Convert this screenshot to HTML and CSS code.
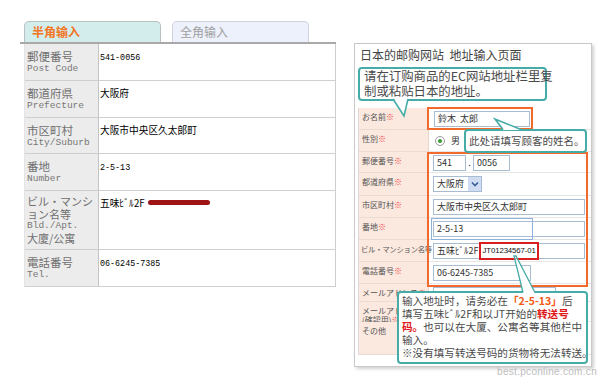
FILE: index.html
```html
<!DOCTYPE html>
<html lang="zh-CN">
<head>
<meta charset="utf-8">
<title>地址输入</title>
<link rel="stylesheet" href="styles.css">
</head>
<body>
<div class="page">
  <section class="left">
    <div class="tabs">
      <div class="tab tab-on">半角输入</div>
      <div class="tab tab-off">全角输入</div>
    </div>
    <div class="addr">
      <div class="lab"><span class="jp">郵便番号</span><span class="en">Post Code</span></div>
      <div class="val"><span class="mono">541-0056</span></div>
      <div class="lab"><span class="jp">都道府県</span><span class="en">Prefecture</span></div>
      <div class="val"><span class="cjk">大阪府</span></div>
      <div class="lab"><span class="jp">市区町村</span><span class="en">City/Suburb</span></div>
      <div class="val"><span class="cjk">大阪市中央区久太郎町</span></div>
      <div class="lab"><span class="jp">番地</span><span class="en">Number</span></div>
      <div class="val"><span class="mono">2-5-13</span></div>
      <div class="lab lab-tall"><span class="jp">ビル・マンシ</span><span class="jp">ョン名等</span><span class="en">Bld./Apt.</span><span class="jp">大廈/公寓</span></div>
      <div class="val"><span class="cjk">五味ﾋﾞﾙ2F</span><span class="blot"></span></div>
      <div class="lab"><span class="jp">電話番号</span><span class="en">Tel.</span></div>
      <div class="val"><span class="mono">06-6245-7385</span></div>
    </div>
  </section>

  <section class="panel">
    <h1 class="ptitle">日本的邮购网站&nbsp; 地址输入页面</h1>
    <div class="callout c1">请在订购商品的EC网站地址栏里复<br>制或粘贴日本的地址。
      <svg class="tail t1" width="60" height="60" viewBox="0 0 60 60"><polygon points="35,30 46,49 50,30" fill="#fff"/><polyline points="35,32 46,49 50,32" fill="none" stroke="#45aca8" stroke-width="1.6"/></svg>
    </div>

    <div class="form">
      <div class="fl">お名前<span class="req">※</span></div>
      <div class="fv"><div class="in w96">鈴木&nbsp; 太郎</div></div>
      <div class="fl">性別<span class="req">※</span></div>
      <div class="fv"><span class="radio"><span class="dot"></span></span><span class="rt">男</span></div>
      <div class="fl">郵便番号<span class="req">※</span></div>
      <div class="fv"><div class="in w33">541</div><span class="sep">.</span><div class="in w37">0056</div></div>
      <div class="fl">都道府県<span class="req">※</span></div>
      <div class="fv"><div class="sel"><span class="seltxt">大阪府</span><span class="arr"><svg width="8" height="6" viewBox="0 0 8 6"><polyline points="1,1.5 4,4.5 7,1.5" fill="none" stroke="#3b5d9a" stroke-width="1.6"/></svg></span></div></div>
      <div class="fl">市区町村<span class="req">※</span></div>
      <div class="fv"><div class="in w152">大阪市中央区久太郎町</div></div>
      <div class="fl">番地<span class="req">※</span></div>
      <div class="fv"><div class="in w152">2-5-13</div></div>
      <div class="fl fl-tight">ビル・マンション名等</div>
      <div class="fv"><div class="in w152">五味ﾋﾞﾙ2F<span class="jt">JT01234567-01</span></div></div>
      <div class="fl">電話番号<span class="req">※</span></div>
      <div class="fv"><div class="in w98">06-6245-7385</div></div>
      <div class="fl">メールアドレス<span class="req">※</span></div>
      <div class="fv"><div class="in w123"></div></div>
      <div class="fl">メールアドレス<br>(確認用)<span class="req">※</span></div>
      <div class="fv"></div>
      <div class="fl">その他</div>
      <div class="fv"></div>
    </div>

    <div class="hl hl-name"></div>
    <div class="hl hl-big"></div>
    <div class="hl-blue"></div>

    <div class="callout c2">此处请填写顾客的姓名。
      <svg class="tail t2" width="60" height="20" viewBox="0 0 60 20"><polygon points="39,12 31,1 57,12" fill="#fff"/><polyline points="39,11.5 31,1 57,11.5" fill="none" stroke="#45aca8" stroke-width="1.6"/></svg>
    </div>
    <div class="callout c3">输入地址时，请务必在<span class="em-o">「2-5-13」</span>后<br>填写五味ﾋﾞﾙ2F和以JT开始的<span class="em-r">转送号</span><br><span class="em-r">码。</span>也可以在大厦、公寓名等其他栏中<br>输入。<br>※没有填写转送号码的货物将无法转送。
      <svg class="tail t3" width="30" height="40" viewBox="0 0 30 40"><polygon points="10,38 2,1 22,38" fill="#fff"/><polyline points="10,37.5 1,1 3,1 22,37.5" fill="none" stroke="#45aca8" stroke-width="1.3"/></svg>
    </div>
  </section>
</div>
<div class="wm">best.pconline.com.cn</div>
</body>
</html>
```

FILE: styles.css
```css
* { box-sizing: border-box; margin: 0; padding: 0; }
body {
  margin: 0;
  width: 600px;
  height: 377px;
  overflow: hidden;
  position: relative;
  background: #fff;
  font-family: "Noto Sans CJK SC", "Noto Sans CJK JP", sans-serif;
}
.page { display: flex; align-items: flex-start; }

/* left part */
.left { margin: 21px 0 0 20px; width: 316px; }
.tabs {
  display: flex;
  gap: 11px;
  padding-left: 4px;
  height: 23px;
  border-bottom: 2px solid #a9a9a9;
}
.tab {
  width: 137px;
  height: 21px;
  border: 1px solid #b9c1c3;
  border-bottom: none;
  border-radius: 5px 5px 0 0;
  font-size: 12px;
  line-height: 20px;
  padding-left: 7px;
}
.tab-on { background: #d3eded; color: #f27524; font-weight: bold; }
.tab-off { background: #edf1fb; color: #a0a0a0; border-color: #cfd4dc; }

.addr {
  margin-left: 4px;
  width: 312px;
  display: grid;
  grid-template-columns: 74px 1fr;
  grid-template-rows: 37px 37px 36px 37px 59px 37px;
  border-left: 1px solid #e4e4e4;
  border-right: 1px solid #cdcdcd;
}
.lab {
  background: #ececec;
  border-right: 1px solid #c4c4c4;
  border-bottom: 1px solid #cfcfcf;
  padding: 6px 0 0 2px;
  color: #707070;
  white-space: nowrap;
}
.lab-tall { padding-top: 4px; }
.val {
  border-bottom: 1px solid #cfcfcf;
  padding: 3px 0 0 1px;
  line-height: 12px;
  color: #000;
}
.jp {
  display: block;
  font-family: "Noto Sans CJK JP", sans-serif;
  font-size: 11.5px;
  line-height: 12.5px;
}
.lab-tall .jp { font-size: 11px; line-height: 12.5px; }
.lab-tall .en { line-height: 12px; }
.en {
  display: block;
  font-family: "Liberation Mono", monospace;
  font-size: 9.5px;
  line-height: 12.5px;
  color: #777;
}
.mono { font-family: "Liberation Mono", monospace; font-size: 8.4px; }
.cjk { font-family: "Noto Sans CJK JP", sans-serif; font-size: 9.7px; }
.blot {
  display: inline-block;
  width: 62px;
  height: 5px;
  margin-left: 3px;
  background: #9e1414;
  border-radius: 3px;
  vertical-align: 2px;
}

/* right panel */
.panel {
  position: relative;
  margin: 43px 0 0 18px;
  width: 238px;
  height: 324px;
  border: 1px solid #c9c9c9;
  box-shadow: 2px 2px 3px rgba(0, 0, 0, 0.18);
  padding: 2px 0 0 3px;
}
.ptitle {
  font-size: 12px;
  font-weight: normal;
  line-height: 17px;
  color: #444;
  padding-left: 2px;
}
.callout {
  border: 2px solid #45aca8;
  border-radius: 4px;
  background: #fff;
  color: #4a4a4a;
  white-space: nowrap;
}
.tail { position: absolute; overflow: visible; }
.c1 {
  position: relative;
  margin-top: 4px;
  width: 189px;
  height: 34px;
  padding-left: 4px;
  font-size: 12.4px;
  line-height: 15px;
}
.t1 { left: -2px; top: -2px; }

.form {
  margin-top: 7px;
  width: 232px;
  display: grid;
  grid-template-columns: 70px 162px;
  grid-template-rows: 22px 22px 21px 23px 22px 22px 22px 22px 18px 20px 33px;
  border-left: 1px solid #dcdcdc;
}
.fl {
  background: #fbe8df;
  border-right: 1px solid #e6d6ce;
  border-bottom: 1px solid #eadbd3;
  padding: 4px 0 0 3px;
  font-family: "Noto Sans CJK JP", sans-serif;
  font-size: 8px;
  line-height: 9px;
  color: #555;
  white-space: nowrap;
}
.fl-tight { padding-left: 2px; font-size: 7.4px; letter-spacing: -0.3px; }
.req { color: #f23c3c; }
.fv {
  border-bottom: 1px solid #e6e6e6;
  padding: 3px 0 0 4px;
  display: flex;
  align-items: flex-start;
  font-family: "Noto Sans CJK JP", sans-serif;
  font-size: 9px;
  color: #333;
}
.in {
  height: 16px;
  border: 1px solid #a8bcd4;
  background: #fff;
  padding-left: 3px;
  line-height: 14px;
  font-size: 9px;
  color: #333;
  white-space: nowrap;
  display: flex;
  align-items: center;
}
.w96 { width: 96px; margin-left: 1px; }
.w33 { width: 33px; }
.w37 { width: 37px; }
.w152 { width: 152px; }
.w98 { width: 98px; }
.w123 { width: 123px; }
.sep { width: 7px; text-align: center; line-height: 16px; }
.radio {
  width: 10px;
  height: 10px;
  margin: 3px 0 0 2px;
  border: 1px solid #9a9a9a;
  border-radius: 50%;
  display: flex;
  align-items: center;
  justify-content: center;
}
.dot { width: 4px; height: 4px; border-radius: 50%; background: #3a9a3a; }
.rt { margin-left: 6px; line-height: 16px; }
.sel {
  width: 49px;
  height: 16px;
  border: 1px solid #a8bcd4;
  display: flex;
  align-items: stretch;
}
.seltxt { flex: 1; padding-left: 3px; line-height: 14px; }
.arr {
  width: 13px;
  background: #cfdcf1;
  display: flex;
  align-items: center;
  justify-content: center;
}
.jt {
  display: inline-block;
  margin-left: 1px;
  height: 18px;
  border: 2px solid #d81e1e;
  font-size: 7.8px;
  line-height: 14px;
  padding: 0 1px;
  color: #111;
  font-family: "Liberation Sans", sans-serif;
  letter-spacing: -0.1px;
}

.hl { position: absolute; border: 2px solid #f2692c; }
.hl-name { left: 72px; top: 63px; width: 106px; height: 23px; }
.hl-big { left: 72px; top: 108px; width: 161px; height: 135px; }
.hl-blue {
  position: absolute;
  left: 76px;
  top: 174px;
  width: 102px;
  height: 22px;
  border: 1.5px solid #8fb1da;
}

.c2 {
  position: absolute;
  left: 109px;
  top: 85px;
  width: 123px;
  height: 24px;
  padding-left: 3px;
  font-size: 10.5px;
  line-height: 20px;
}
.t2 { left: -2px; top: -13px; }
.c3 {
  position: absolute;
  left: 42px;
  top: 247px;
  width: 191px;
  height: 73px;
  padding: 1px 0 0 3px;
  font-size: 10.6px;
  line-height: 13px;
}
.t3 { left: 114px; top: -38px; }
.em-o { color: #f05a14; font-weight: bold; }
.em-r { color: #e01818; font-weight: bold; }

.wm {
  position: absolute;
  right: 3px;
  bottom: 0;
  font-family: "Liberation Sans", sans-serif;
  font-size: 10px;
  line-height: 11px;
  color: #bdbdbd;
  letter-spacing: 0.3px;
}
```
